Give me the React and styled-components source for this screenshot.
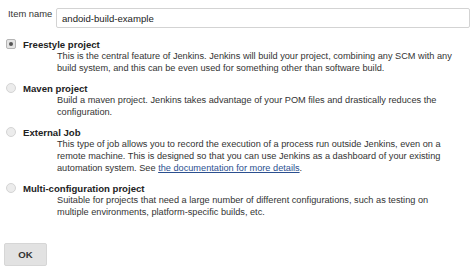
import React from "react";
import styled, { createGlobalStyle } from "styled-components";

const Global = createGlobalStyle`
  html, body { margin: 0; padding: 0; background: #fff; }
  body { font-family: "Liberation Sans", Arial, sans-serif; color: #333; }
`;

const Page = styled.div`
  width: 474px;
  height: 277px;
  overflow: hidden;
  display: flex;
  flex-direction: column;
`;

const NameRow = styled.div`
  display: flex;
  align-items: flex-start;
  padding: 8px 4px 0 8px;
  gap: 4px;
`;

const NameLabel = styled.label`
  font-size: 9.4px;
  line-height: 12px;
  color: #333;
  width: 44px;
  white-space: nowrap;
`;

const NameInput = styled.div`
  flex: 1;
  height: 18px;
  border: 1px solid #d3d3d3;
  border-radius: 2px;
  padding: 0 5px;
  display: flex;
  align-items: center;
  font-size: 9.6px;
  color: #222;
`;

const Types = styled.div`
  display: flex;
  flex-direction: column;
  margin-top: 10px;
`;

const Item = styled.div`
  display: flex;
  flex-direction: column;
  padding-bottom: 8px;
`;

const Header = styled.div`
  display: flex;
  align-items: center;
  height: 12px;
  padding-left: 6px;
  gap: 7px;
`;

const Radio = styled.span`
  width: 10px;
  height: 10px;
  box-sizing: border-box;
  border-radius: ${(p) => (p.$checked ? "2px" : "50%")};
  border: 1px solid ${(p) => (p.$checked ? "#b5b5b5" : "#d4d4d4")};
  background: ${(p) => (p.$checked ? "#e4e4e4" : "#ececec")};
  display: flex;
  align-items: center;
  justify-content: center;
  flex-shrink: 0;
`;

const Dot = styled.span`
  width: 4px;
  height: 4px;
  border-radius: 50%;
  background: #555;
`;

const Title = styled.span`
  font-size: 9.6px;
  font-weight: bold;
  color: #222;
  white-space: nowrap;
`;

const Desc = styled.div`
  margin-top: 1px;
  margin-left: 57px;
  margin-right: 18px;
  font-size: 9.2px;
  line-height: 11.6px;
  color: #333;
`;

const Link = styled.a`
  color: #2b4f8f;
  text-decoration: underline;
`;

const Footer = styled.div`
  padding: 17px 0 0 4px;
`;

const OkButton = styled.button`
  width: 43px;
  height: 23px;
  background: #e2e2e2;
  border: 1px solid #d6d6d6;
  border-radius: 2px;
  font-family: "Liberation Sans", Arial, sans-serif;
  font-size: 9.6px;
  font-weight: bold;
  color: #333;
  padding: 0;
`;

const types = [
  {
    title: "Freestyle project",
    checked: true,
    desc: "This is the central feature of Jenkins. Jenkins will build your project, combining any SCM with any build system, and this can be even used for something other than software build.",
  },
  {
    title: "Maven project",
    desc: "Build a maven project. Jenkins takes advantage of your POM files and drastically reduces the configuration.",
  },
  {
    title: "External Job",
    desc: (
      <>
        This type of job allows you to record the execution of a process run outside Jenkins, even on a
        remote machine. This is designed so that you can use Jenkins as a dashboard of your existing
        automation system. See <Link href="#">the documentation for more details</Link>.
      </>
    ),
  },
  {
    title: "Multi-configuration project",
    desc: "Suitable for projects that need a large number of different configurations, such as testing on multiple environments, platform-specific builds, etc.",
  },
];

export default function App() {
  return (
    <Page>
      <Global />
      <NameRow>
        <NameLabel>Item name</NameLabel>
        <NameInput>andoid-build-example</NameInput>
      </NameRow>
      <Types>
        {types.map((t) => (
          <Item key={t.title}>
            <Header>
              <Radio $checked={t.checked}>{t.checked && <Dot />}</Radio>
              <Title>{t.title}</Title>
            </Header>
            <Desc>{t.desc}</Desc>
          </Item>
        ))}
      </Types>
      <Footer>
        <OkButton>OK</OkButton>
      </Footer>
    </Page>
  );
}
